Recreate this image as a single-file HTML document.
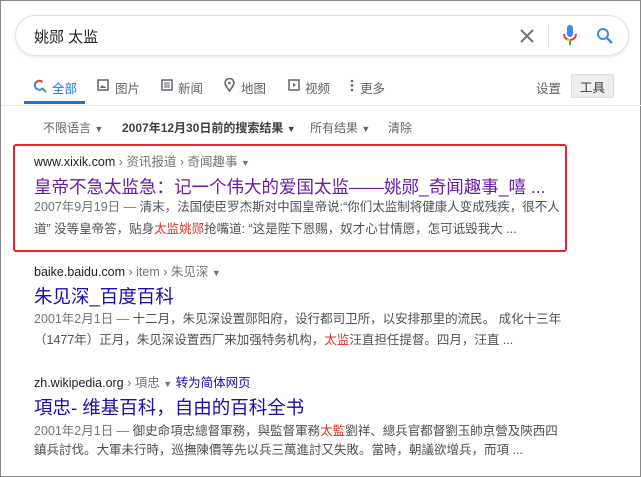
<!DOCTYPE html>
<html><head><meta charset="utf-8"><style>
*{margin:0;padding:0;box-sizing:border-box}
body{width:641px;height:477px;background:#fff;font-family:"Liberation Sans","Noto Sans CJK SC",sans-serif;position:relative;overflow:hidden;border:1px solid #888}
.a{position:absolute;white-space:nowrap}
.g{color:#70757a}
.u{color:#202124;font-size:13px}
.t{color:#1a0dab;font-size:18.5px}
.s{color:#4d5156;font-size:12.5px}
.r{color:#d93025}
.tab{font-size:12.5px;color:#5f6368}
</style></head><body>
<div class="a" style="left:14px;top:14px;width:614px;height:41px;border:1px solid #dfe1e5;border-radius:21px;box-shadow:0 1px 3px rgba(0,0,0,.1)"></div>
<div class="a" style="left:33px;top:25px;font-size:15px;color:#202124">姚郧 太监</div>
<svg class="a" style="left:517px;top:26px" width="18" height="18" viewBox="0 0 18 18"><path d="M3 3L15 15M15 3L3 15" stroke="#70757a" stroke-width="2"/></svg>
<div class="a" style="left:547px;top:24px;width:1px;height:22px;background:#dfe1e5"></div>
<svg class="a" style="left:561px;top:23px" width="16" height="24" viewBox="0 0 16 24"><rect x="5" y="1" width="6" height="12" rx="3" fill="#4285f4"/><path d="M2 10a6 6 0 0 0 12 0" stroke="#ea4335" stroke-width="2" fill="none"/><path d="M8 16v5" stroke="#34a853" stroke-width="2"/><path d="M5 16 l3 0" stroke="#fbbc05" stroke-width="2"/></svg>
<svg class="a" style="left:595px;top:26px" width="18" height="18" viewBox="0 0 18 18"><circle cx="7" cy="7" r="5" stroke="#4285f4" stroke-width="2" fill="none"/><path d="M11 11l5 5" stroke="#4285f4" stroke-width="2.4"/></svg>
<svg class="a" style="left:32px;top:78px" width="14" height="14" viewBox="0 0 14 14"><path d="M9.5 3A4.5 4.5 0 1 0 10 9" stroke="#4285f4" stroke-width="2" fill="none"/><path d="M3 3.5A4.5 4.5 0 0 1 9.5 3" stroke="#ea4335" stroke-width="2" fill="none"/><path d="M9 9l4 4" stroke="#34a853" stroke-width="2"/></svg>
<div class="a tab" style="left:51px;top:77px;color:#1a73e8">全部</div>
<div class="a" style="left:23px;top:100px;width:61px;height:3px;background:#1a73e8"></div>
<div class="a" style="left:0;top:104px;width:641px;height:1px;background:#ebebeb"></div>
<svg class="a" style="left:96px;top:78px" width="12" height="12"><rect x="1" y="1" width="10" height="10" fill="none" stroke="#5f6368" stroke-width="1.5"/><path d="M3 9l2-3 2 2 1-1 1 2z" fill="#5f6368"/></svg>
<div class="a tab" style="left:114px;top:77px">图片</div>
<svg class="a" style="left:160px;top:78px" width="12" height="12"><rect x="1" y="1" width="10" height="10" fill="none" stroke="#5f6368" stroke-width="1.5"/><path d="M3 4h6M3 6h6M3 8h6" stroke="#5f6368"/></svg>
<div class="a tab" style="left:177px;top:77px">新闻</div>
<svg class="a" style="left:223px;top:77px" width="11" height="14"><path d="M5.5 13C2 8 1 6.5 1 5a4.5 4.5 0 0 1 9 0c0 1.5-1 3-4.5 8z" fill="none" stroke="#5f6368" stroke-width="1.5"/><circle cx="5.5" cy="5" r="1.3" fill="#5f6368"/></svg>
<div class="a tab" style="left:240px;top:77px">地图</div>
<svg class="a" style="left:287px;top:78px" width="12" height="12"><rect x="1" y="1" width="10" height="10" fill="none" stroke="#5f6368" stroke-width="1.5"/><path d="M5 4l3 2-3 2z" fill="#5f6368"/></svg>
<div class="a tab" style="left:304px;top:77px">视频</div>
<svg class="a" style="left:349px;top:78px" width="4" height="13"><circle cx="2" cy="2" r="1.3" fill="#5f6368"/><circle cx="2" cy="6.5" r="1.3" fill="#5f6368"/><circle cx="2" cy="11" r="1.3" fill="#5f6368"/></svg>
<div class="a tab" style="left:359px;top:77px">更多</div>
<div class="a tab" style="left:535px;top:77px">设置</div>
<div class="a tab" style="left:570px;top:73px;width:43px;height:24px;background:#eeeeee;border:1px solid #dadce0;border-radius:2px;color:#3c4043;display:flex;align-items:center;justify-content:center">工具</div>
<div class="a tab" style="left:42px;top:118px;font-size:12px">不限语言 <span style="font-size:9px">▼</span></div>
<div class="a tab" style="left:121px;top:118px;color:#3c4043;font-weight:bold;font-size:12px">2007年12月30日前的搜索结果 <span style="font-size:9px">▼</span></div>
<div class="a tab" style="left:309px;top:118px;font-size:12px">所有结果 <span style="font-size:9px">▼</span></div>
<div class="a tab" style="left:387px;top:118px;font-size:12px">清除</div>

<div class="a" style="left:12px;top:143px;width:554px;height:108px;border:2px solid #e8232b;border-radius:3px"></div>
<div class="a u" style="left:33px;top:150px;font-size:12.5px">www.xixik.com <span class="g">› 资讯报道 › 奇闻趣事</span> <span class="g" style="font-size:9px">▼</span></div>
<div class="a t" style="left:33px;top:173px;color:#681da8;font-size:17.5px">皇帝不急太监急：记一个伟大的爱国太监——姚郧_奇闻趣事_嘻 ...</div>
<div class="a s" style="left:33px;top:195px"><span class="g">2007年9月19日 — </span>清末，法国使臣罗杰斯对中国皇帝说:“你们太监制将健康人变成残疾，很不人</div>
<div class="a s" style="left:33px;top:217px">道” 没等皇帝答，贴身<span class="r">太监姚郧</span>抢嘴道: “这是陛下恩赐，奴才心甘情愿，怎可诋毁我大 ...</div>

<div class="a u" style="left:33px;top:260px;font-size:12.5px">baike.baidu.com <span class="g">› item › 朱见深</span> <span class="g" style="font-size:9px">▼</span></div>
<div class="a t" style="left:33px;top:282px">朱见深_百度百科</div>
<div class="a s" style="left:33px;top:307px"><span class="g">2001年2月1日 — </span>十二月，朱见深设置郧阳府，设行都司卫所，以安排那里的流民。 成化十三年</div>
<div class="a s" style="left:33px;top:328px">（1477年）正月，朱见深设置西厂来加强特务机构，<span class="r">太监</span>汪直担任提督。四月，汪直 ...</div>

<div class="a u" style="left:33px;top:371px;font-size:12.5px">zh.wikipedia.org <span class="g">› 項忠</span> <span class="g" style="font-size:9px">▼</span> <span style="color:#1a0dab">转为简体网页</span></div>
<div class="a t" style="left:33px;top:393px">項忠- 维基百科，自由的百科全书</div>
<div class="a s" style="left:33px;top:419px"><span class="g">2001年2月1日 — </span>御史命項忠總督軍務，與監督軍務<span class="r">太監</span>劉祥、總兵官都督劉玉帥京營及陝西四</div>
<div class="a s" style="left:33px;top:438px">鎮兵討伐。大軍未行時，巡撫陳價等先以兵三萬進討又失敗。當時，朝議欲增兵，而項 ...</div>
</body></html>
